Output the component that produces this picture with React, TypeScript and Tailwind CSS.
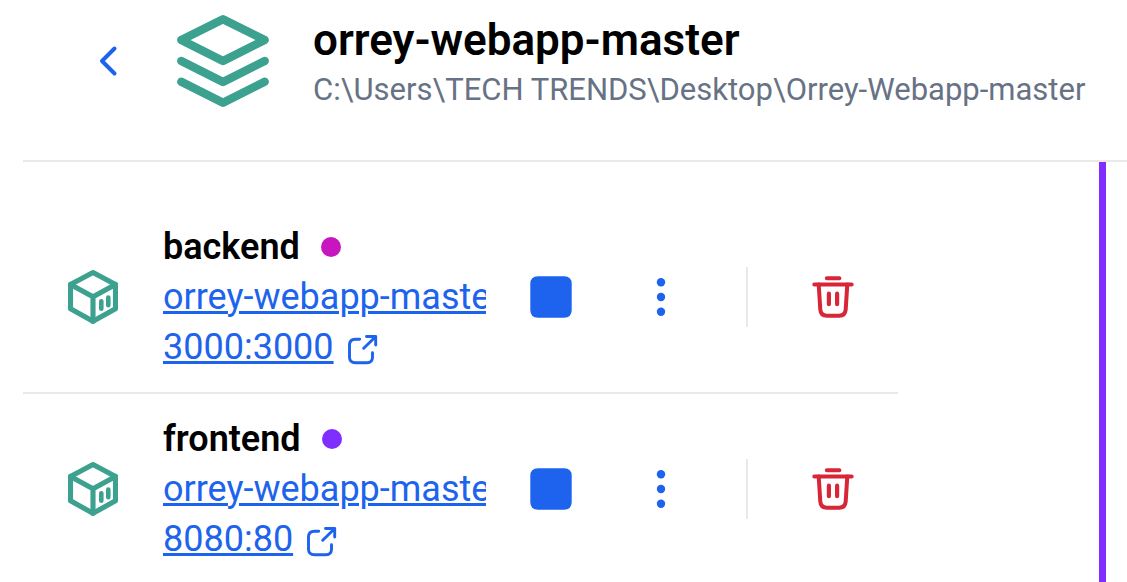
type Service = {
  name: string;
  container: string;
  ports: string;
  dot: string;
};

const services: Service[] = [
  { name: "backend", container: "orrey-webapp-master-backend-1", ports: "3000:3000", dot: "bg-[#c815c0]" },
  { name: "frontend", container: "orrey-webapp-master-frontend-1", ports: "8080:80", dot: "bg-[#7f2eff]" },
];

function BackIcon() {
  return (
    <svg width="20" height="32" viewBox="0 0 20 32" fill="none" stroke="currentColor" strokeWidth="4" strokeLinecap="round" strokeLinejoin="round" aria-hidden="true">
      <path d="M16.5 3.500 4 16l12.500 12.500" />
    </svg>
  );
}

function StackIcon() {
  return (
    <svg className="shrink-0 text-[#3ca18f]" width="92" height="92" viewBox="0 0 92 92" fill="none" stroke="currentColor" strokeWidth="8.400" strokeLinecap="round" strokeLinejoin="round" aria-hidden="true">
      <path d="M46 4.300 87.700 25 46 46 4.300 25Z" />
      <path d="M4.300 46 46 67l41.700-21" />
      <path d="M4.300 66.800 46 87.700l41.700-20.900" />
    </svg>
  );
}

function ContainerIcon() {
  return (
    <svg className="shrink-0 text-[#3ca18f]" width="50" height="54" viewBox="0 0 50 54" fill="none" stroke="currentColor" strokeWidth="5.100" strokeLinecap="round" strokeLinejoin="round" aria-hidden="true">
      <path d="M25 2.600 47.500 14.500V38.800L25 51.300 2.500 38.800V14.500Z" />
      <path d="M2.500 14.500 25 26.700 47.500 14.500M25 26.700V51.300" />
      <path d="M33.300 31.200V38.800M40.300 27.600V35.200" strokeWidth="4.600" />
    </svg>
  );
}

function ExternalIcon() {
  return (
    <svg width="31" height="35" viewBox="0 -4 31 35" fill="none" stroke="currentColor" strokeWidth="2.900" strokeLinecap="round" strokeLinejoin="round" aria-hidden="true">
      <path d="M12.700 5.200H8.500Q2.500 5.200 2.500 11V23.300Q2.500 28.800 8.500 28.800H20Q25.500 28.800 25.500 23.300V18.700" />
      <path d="M16.700 14.300 28.500 2.700M19.500 2.500H28.700V11" />
    </svg>
  );
}

function StopIcon() {
  return (
    <svg width="42" height="42" viewBox="0 0 42 42" fill="currentColor" aria-hidden="true">
      <path d="M8 0.300H34Q41.700 0.300 41.700 8V34Q41.700 41.700 34 41.700H8Q0.300 41.700 0.300 34V8Q0.300 0.300 8 0.300Z" />
    </svg>
  );
}

function MoreIcon() {
  return (
    <svg width="10" height="40" viewBox="0 0 10 40" fill="currentColor" aria-hidden="true">
      <circle cx="5" cy="5.300" r="4.200" />
      <circle cx="5" cy="20" r="4.200" />
      <circle cx="5" cy="34.700" r="4.200" />
    </svg>
  );
}

function TrashIcon() {
  return (
    <svg width="42" height="44" viewBox="0 0 42 44" fill="none" stroke="currentColor" strokeWidth="4" strokeLinecap="round" strokeLinejoin="round" aria-hidden="true">
      <path d="M14.800 3.300H27.400M2.300 9.400H39.700" />
      <path d="M6.700 9.400 8.300 34.500Q8.800 40.700 14.800 40.700H27.200Q33.200 40.700 33.700 34.500L35.300 9.400" />
      <path d="M16.900 18.700V29.200M25.100 18.700V29.200" strokeWidth="4.200" />
    </svg>
  );
}

function ServiceRow({ service }: { service: Service }) {
  return (
    <li className="flex items-center border-b-2 border-[#e9e9e9] py-5 pl-[45px] pr-11">
      <ContainerIcon />
      <div className="ml-[45px] min-w-0 flex-1 leading-[50px]">
        <div className="flex items-center gap-[21px]">
          <h2 className="text-[36px] font-semibold text-black">{service.name}</h2>
          <span className={`size-5 rounded-full ${service.dot}`} />
        </div>
        <a href="#container" className="block overflow-hidden whitespace-nowrap text-[#1d63ed] underline decoration-3 underline-offset-2">
          {service.container}
        </a>
        <a href="#ports" className="flex items-center gap-[13px] text-[#1d63ed]">
          <span className="underline decoration-3 underline-offset-2">{service.ports}</span>
          <ExternalIcon />
        </a>
      </div>
      <div className="ml-11 flex shrink-0 items-center text-[#1d63ed]">
        <button type="button" aria-label={`Stop ${service.name}`}>
          <StopIcon />
        </button>
        <button type="button" aria-label={`More actions for ${service.name}`} className="ml-[84px]">
          <MoreIcon />
        </button>
        <div className="ml-20 h-[60px] w-0.5 bg-[#e9e9e9]" />
        <button type="button" aria-label={`Delete ${service.name}`} className="ml-16 text-[#d72638]">
          <TrashIcon />
        </button>
      </div>
    </li>
  );
}

export default function App() {
  return (
    <div className="flex h-screen flex-col overflow-hidden bg-white pl-[23px] font-['Roboto',sans-serif] text-[36px]">
      <header className="flex shrink-0 items-start border-b-2 border-[#e9e9e9] pb-[53px] pl-[75px] pt-[15px]">
        <button type="button" aria-label="Back" className="self-center text-[#1d63ed]">
          <BackIcon />
        </button>
        <div className="ml-[59px]">
          <StackIcon />
        </div>
        <div className="-mb-2 ml-11 min-w-0 whitespace-nowrap">
          <h1 className="text-[44px] font-semibold leading-[50px] text-black">orrey-webapp-master</h1>
          <p className="text-[31px] leading-[50px] text-[#677285]">C:\Users\TECH TRENDS\Desktop\Orrey-Webapp-master</p>
        </div>
      </header>
      <main className="flex min-h-0 flex-1 pr-[21px]">
        <ul className="mr-[201px] min-w-0 flex-1 pt-10">
          {services.map((service) => (
            <ServiceRow key={service.name} service={service} />
          ))}
        </ul>
        <div className="w-[7px] shrink-0 bg-[#7f2eff]" />
      </main>
    </div>
  );
}
